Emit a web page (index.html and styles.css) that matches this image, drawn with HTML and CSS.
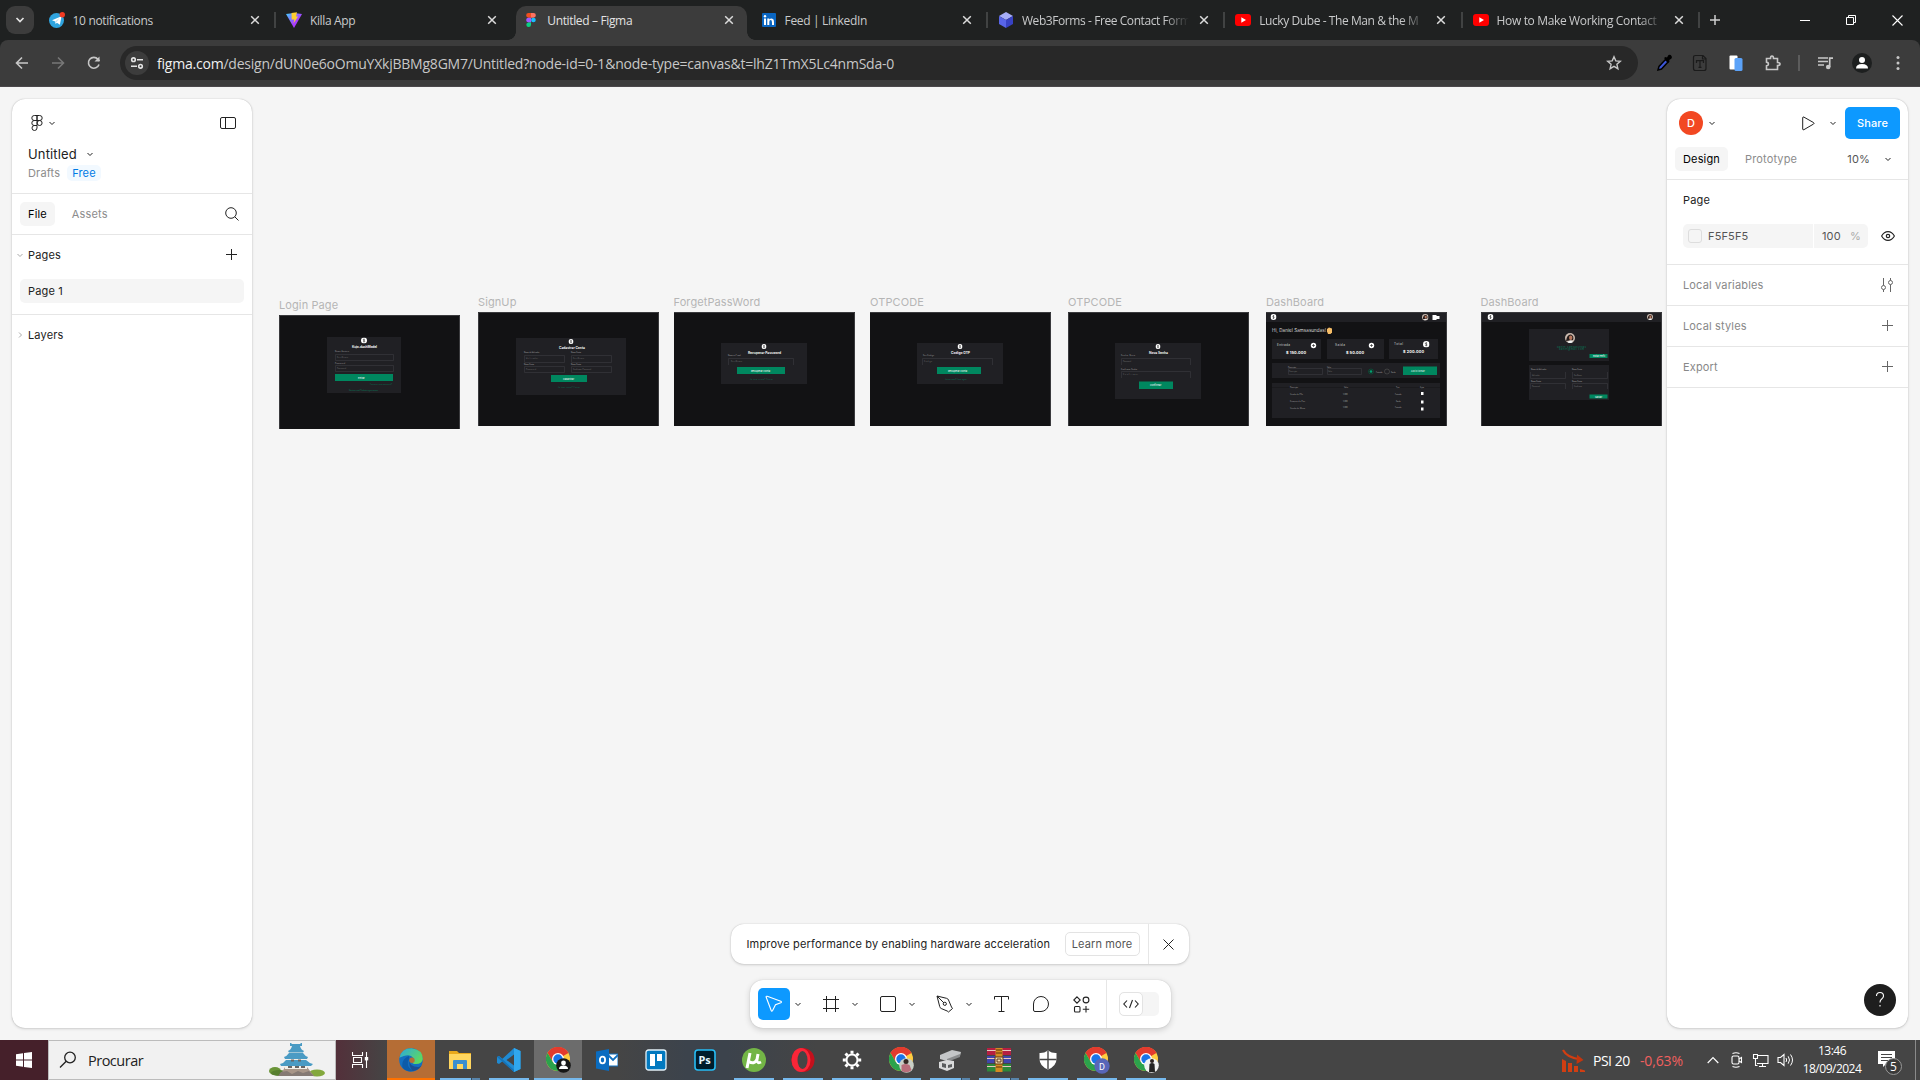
FILE: index.html
```html
<!DOCTYPE html>
<html lang="en">
<head>
<meta charset="utf-8">
<title>Untitled – Figma</title>
<link rel="stylesheet" href="styles.css">
</head>
<body>
<svg class="defs" width="0" height="0">
  <defs>
    <symbol id="close" viewBox="0 0 10 10"><path d="M1.2 1.2l7.6 7.6M8.8 1.2L1.2 8.8" fill="none" stroke="currentColor" stroke-width="1.5"/></symbol>
    <symbol id="chev" viewBox="0 0 8 8"><path d="M1.5 3L4 5.5 6.5 3" fill="none" stroke="currentColor"/></symbol>
    <symbol id="plus" viewBox="0 0 12 12"><path d="M5.5 0v11M0 5.500h11" fill="none" stroke="currentColor"/></symbol>
    <symbol id="youtube" viewBox="0 0 16 16"><rect y="2" width="16" height="12" rx="3" fill="#f00"/><path d="M6.3 5.3v5.4L11 8z" fill="#fff"/></symbol>
    <symbol id="chrome" viewBox="0 0 24 24"><circle cx="12" cy="12" r="12" fill="#ffcd40"/><path d="M12 12L1.6 6A12 12 0 0 1 22.4 6z" fill="#e33b2e"/><path d="M12 6h10.4A12 12 0 0 0 1.6 6l5.2 9z" fill="#e33b2e"/><path d="M1.6 6A12 12 0 0 0 12 24l5.2-9H6.8z" fill="#2ba24c"/><circle cx="12" cy="12" r="6" fill="#fff"/><circle cx="12" cy="12" r="4.7" fill="#1a73e8"/></symbol>
    <symbol id="coin" viewBox="0 0 6 6"><circle cx="3" cy="3" r="3" fill="#fff"/><path d="M3.8 1.9q-1.6-.6-1.6.4 0 .6.8.7t.8.8q0 .9-1.7.3M3 1.2v3.6" fill="none" stroke="#222" stroke-width=".5"/></symbol>
    <symbol id="portrait" viewBox="0 0 10 10"><circle cx="5" cy="5" r="5" fill="#c9b9ae"/><path d="M1 8Q2 1 6 1.500Q9.500 3 8 7z" fill="#231a19"/><ellipse cx="5.700" cy="4.800" rx="1.700" ry="2.200" fill="#b8795f"/><path d="M2.500 9.300Q5 6 8 9q-3 2-5.500.3z" fill="#eee"/></symbol>
  </defs>
</svg>

<div class="tabstrip">
  <button class="tab-search"><svg width="10" height="10" viewBox="0 0 10 10"><path d="M1.500 3L5 6.500 8.500 3" fill="none" stroke="#e3e3e3" stroke-width="1.700"/></svg></button>
  <div class="tabs">
    <div class="tab"><svg class="fav" viewBox="0 0 16 16"><circle cx="7.500" cy="8.500" r="7.500" fill="#2fa4df"/><path d="M3 8.300l9.500-4-1.600 8.400-3-2-1.300 1.400-.4-2.700z" fill="#fff"/><path d="M6.200 9.400l4.500-3.600-3.300 4.500z" fill="#c0dff0"/><circle cx="13.300" cy="2.700" r="2.700" fill="#f23a22"/></svg><span class="tab-title">10 notifications</span><svg class="x"><use href="#close"/></svg></div>
    <div class="tab"><svg class="fav" viewBox="0 0 16 16"><defs><linearGradient id="vg" x2="1" y2="1"><stop stop-color="#41d1ff"/><stop offset=".6" stop-color="#a93dff"/></linearGradient></defs><path d="M0 2l8-1 8 1-8 14z" fill="url(#vg)"/><path d="M5.500 1l5.500-.8-1 4.300 2 .1-4.500 7 .8-4.200-2.600.1z" fill="#ffce2e"/></svg><span class="tab-title">Killa App</span><svg class="x"><use href="#close"/></svg></div>
    <div class="tab active"><svg class="fav" viewBox="0 0 16 16"><path d="M5.500 1H8v4.700H5.500a2.350 2.350 0 0 1 0-4.700z" fill="#f24e1e"/><path d="M8 1h2.500a2.350 2.350 0 0 1 0 4.700H8z" fill="#ff7262"/><path d="M5.500 5.700H8v4.700H5.500a2.350 2.350 0 0 1 0-4.700z" fill="#a259ff"/><circle cx="10.400" cy="8" r="2.350" fill="#1abcfe"/><path d="M5.500 10.400H8v2.300a2.350 2.350 0 1 1-2.500-2.300z" fill="#0acf83"/></svg><span class="tab-title">Untitled – Figma</span><svg class="x"><use href="#close"/></svg></div>
    <div class="tab"><svg class="fav" viewBox="0 0 16 16"><rect x="1" y="1" width="14" height="14" rx="1" fill="#0a66c2"/><path d="M3 6.500h2V13H3zM6.300 6.500h2v1q2-2.200 4.200 0 .6 1 .5 5.500h-2q.2-5-1.200-5-1.700 0-1.500 2v3h-2z" fill="#fff"/><circle cx="4" cy="4.200" r="1.200" fill="#fff"/></svg><span class="tab-title">Feed | LinkedIn</span><svg class="x"><use href="#close"/></svg></div>
    <div class="tab"><svg class="fav" viewBox="0 0 16 16"><path d="M8 0l7 4-7 4-7-4z" fill="#a6adf8"/><path d="M1 4l7 4v8l-7-4z" fill="#5865e8"/><path d="M15 4L8 8v8l7-4z" fill="#3842c4"/></svg><span class="tab-title fade tight">Web3Forms - Free Contact Form</span><svg class="x"><use href="#close"/></svg></div>
    <div class="tab"><svg class="fav"><use href="#youtube"/></svg><span class="tab-title fade tight">Lucky Dube - The Man &amp; the M</span><svg class="x"><use href="#close"/></svg></div>
    <div class="tab"><svg class="fav"><use href="#youtube"/></svg><span class="tab-title fade">How to Make Working Contact</span><svg class="x"><use href="#close"/></svg></div>
  </div>
  <svg class="newtab" width="12" height="12" viewBox="0 0 12 12"><path d="M6 1v10M1 6h10" stroke="#d0d0d0" stroke-width="1.500"/></svg>
  <div class="winctl">
    <svg width="10" height="10"><path d="M0 5.500h10" stroke="#fff"/></svg>
    <svg width="10" height="10"><path d="M.5 2.500h7v7h-7zM2.500 2.500v-2h7v7h-2" fill="none" stroke="#fff"/></svg>
    <svg width="11" height="11"><path d="M.5.5l10 10M10.500.5l-10 10" stroke="#fff" stroke-width="1.100"/></svg>
  </div>
</div>

<div class="navbar">
  <div class="nav-btns">
    <svg width="16" height="16"><path d="M14 8H3M8 2.500L2.500 8 8 13.500" fill="none" stroke="#c7c7c7" stroke-width="1.600"/></svg>
    <svg width="16" height="16"><path d="M2 8h11M8 2.500L13.500 8 8 13.500" fill="none" stroke="#777" stroke-width="1.600"/></svg>
    <svg width="16" height="16"><path d="M13 9.500A5.400 5.400 0 1 1 12 4.300L13.500 6" fill="none" stroke="#c7c7c7" stroke-width="1.600"/><path d="M13.500 1.500v5h-5z" fill="#c7c7c7"/></svg>
  </div>
  <div class="omnibox">
    <span class="site"><svg width="14" height="14"><g fill="none" stroke="#e3e3e3" stroke-width="1.600"><circle cx="3.500" cy="3.700" r="1.800"/><circle cx="10.500" cy="10.300" r="1.800"/><path d="M7 3.700h6M1 10.300h6"/></g></svg></span>
    <span class="url"><b>figma.com</b>/design/dUN0e6oOmuYXkjBBMg8GM7/Untitled?node-id=0-1&amp;node-type=canvas&amp;t=lhZ1TmX5Lc4nmSda-0</span>
    <svg class="star" width="16" height="16"><path d="M8 1.800l1.800 4.100 4.500.4-3.400 3 1 4.400L8 11.400l-3.900 2.300 1-4.400-3.400-3 4.500-.4z" fill="none" stroke="#c7c7c7" stroke-width="1.400"/></svg>
  </div>
  <div class="ext">
    <svg width="16" height="18"><path d="M2 16l1-3.500 6.500-7 2.500 2.500-6.500 7z" fill="#3d57d8" stroke="#000" stroke-width="1.500"/><path d="M8 4l1.500-1 1.500.4L12.500 1q2-.8 3 1t-.6 3l-1.700 1 .3 1.500L12.500 9z" fill="#000"/></svg>
    <svg class="g20" width="16" height="18"><path d="M3.500 1.500H11l3 3v10q0 2-2 2H3.500q-2 0-2-2v-11q0-2 2-2zM10.500 1.500v3.500H14" fill="none" stroke="#1b1b1b" stroke-width="1.200"/><path d="M4.500 9V6.700h7V9M8 6.700v6.500M6.500 13.300h3" fill="none" stroke="#1b1b1b" stroke-width="1.200"/></svg>
    <svg class="g20" width="16" height="18"><rect x="1.500" y="1.500" width="8" height="14" rx="1" fill="#fff"/><rect x="6.500" y="4" width="8" height="13" rx="1.500" fill="#5ba2f8"/></svg>
    <svg class="g20" width="18" height="18"><path d="M2.500 4.500h4Q6.500 2 8 2t1.500 2.500h4v4Q16 8.500 16 10t-2.500 1.500v4h-11v-3.600q2-.3 2-1.900t-2-1.900z" fill="none" stroke="#c7c7c7" stroke-width="1.600"/></svg>
    <i class="vbar"></i>
    <svg width="16" height="16"><path d="M0 3h10M0 6.500h10M0 10h6" stroke="#c7c7c7" stroke-width="1.500"/><path d="M11.700 12V3.200H15" fill="none" stroke="#c7c7c7" stroke-width="1.700"/><circle cx="10.200" cy="12" r="2.300" fill="#c7c7c7"/></svg>
    <svg class="me" width="20" height="20"><circle cx="10" cy="10" r="10" fill="#1d1f1f"/><circle cx="10" cy="7" r="3" fill="#fff"/><path d="M4 15.500q0-4.500 6-4.500t6 4.500z" fill="#fff"/></svg>
    <svg class="more" width="4" height="16"><g fill="#c7c7c7"><circle cx="2" cy="2.500" r="1.500"/><circle cx="2" cy="8" r="1.500"/><circle cx="2" cy="13.500" r="1.500"/></g></svg>
  </div>
</div>

<main class="workspace">
  <aside class="panel left">
    <div class="file-head">
      <div class="row">
        <span class="logo-menu"><svg width="12" height="16"><path d="M6 .5H3.300a2.500 2.500 0 0 0 0 5H6zM6 .5h2.700a2.500 2.500 0 0 1 0 5H6zM6 5.500H3.300a2.500 2.500 0 0 0 0 5H6zM6 10.500H3.300A2.500 2.500 0 1 0 6 13z" fill="none" stroke="#222"/><circle cx="8.600" cy="8" r="2.500" fill="none" stroke="#222"/></svg><svg width="8" height="8"><use href="#chev"/></svg></span>
        <svg width="16" height="12"><rect x=".5" y=".5" width="15" height="11" rx="1.500" fill="none" stroke="#222"/><path d="M5.500.5v11" stroke="#222"/></svg>
      </div>
      <div class="file-name"><span>Untitled</span><svg width="8" height="8"><use href="#chev"/></svg></div>
      <div class="file-meta"><span>Drafts</span><span class="free">Free</span></div>
    </div>
    <div class="sec left-tabs"><span class="pill">File</span><span class="muted">Assets</span><svg class="end" width="14" height="14"><circle cx="6" cy="6" r="5.300" fill="none" stroke="#222"/><path d="M9.800 9.800l3.700 3.700" stroke="#222"/></svg></div>
    <div class="sec pages">
      <div class="row-title"><svg class="tiny" width="8" height="8"><use href="#chev"/></svg><span>Pages</span><svg class="end" width="12" height="12"><use href="#plus"/></svg></div>
      <div class="page-item">Page 1</div>
    </div>
    <div class="sec layers"><div class="row-title"><svg class="tiny turn" width="8" height="8"><use href="#chev"/></svg><span>Layers</span></div></div>
  </aside>

  <section class="canvas">
    <figure class="frame f1"><figcaption>Login Page</figcaption>
      <svg width="181" height="114"><rect width="181" height="114" fill="#121214"/><path d="M.5 114V.5h180V114" fill="none" stroke="#3a3a3d"/><rect x="48" y="22" width="74" height="56" fill="#202024"/>
      <use href="#coin" x="82" y="22.500" width="6" height="6"/>
      <text class="h" x="73" y="33" textLength="25">Kujo-dashModel</text><text class="s" x="56" y="37" textLength="14">Nome Usuário</text><text class="s" x="56" y="49" textLength="10">Password</text>
      <path class="in" d="M56.500 39.500h58v6h-58zM56.500 50.500h58v6h-58z"/><text class="p" x="58" y="43" textLength="11">SeuNome</text><text class="p" x="58" y="54" textLength="9">Password</text>
      <rect x="56" y="59" width="58" height="7" fill="#00875f"/><text class="b" x="79" y="63.500">Entrar</text><text class="g" x="91" y="69.500" textLength="22">Esqueceu sua password?</text><text class="g" x="70" y="75.500" textLength="29">Não tem conta? Cadastre agora mesmo</text></svg></figure>
    <figure class="frame f2"><figcaption>SignUp</figcaption>
      <svg width="181" height="114"><rect width="181" height="114" fill="#121214"/><path d="M.5 114V.5h180V114" fill="none" stroke="#3a3a3d"/><rect x="38" y="26" width="110" height="57" fill="#202024"/>
      <use href="#coin" x="90.500" y="27" width="5" height="5"/><text class="h" x="81" y="36.500" textLength="26">Cadastrar Conta</text>
      <text class="s" x="46" y="41">Nome do Utilizador</text><text class="s" x="93" y="41">Nome Conta</text><text class="s" x="46" y="53">Nome Conta</text><text class="s" x="93" y="53">Nome Conta</text>
      <path class="in" d="M46.500 43.500h40v7h-40zM93.500 43.500h40v7h-40zM46.500 54.500h40v6h-40zM93.500 54.500h40v6h-40z"/><text class="p" x="48" y="47" textLength="12">Utilizador</text><text class="p" x="95" y="47" textLength="11">SeuNome</text><text class="p" x="48" y="58" textLength="10">Password</text><text class="p" x="95" y="58" textLength="18">Confirmar Password</text>
      <rect x="73" y="63" width="36" height="7" fill="#00875f"/><text class="b" x="85" y="67.500">Cadastrar</text><text class="g" x="80" y="75.500" textLength="22">Já tem conta? Entrar</text></svg></figure>
    <figure class="frame f3"><figcaption>ForgetPassWord</figcaption>
      <svg width="181" height="114"><rect width="181" height="114" fill="#121214"/><path d="M0 .5h180.500V114" fill="none" stroke="#3a3a3d"/><rect x="47" y="31" width="86" height="41" fill="#202024"/>
      <use href="#coin" x="87.500" y="32" width="5" height="5"/><text class="h" x="74" y="41.500" textLength="33">Recuperar Password</text><text class="s" x="54" y="44">Nome ou E-mail</text>
      <path class="in" d="M54.500 53v-6.500h65V53"/><text class="p" x="57" y="50" textLength="11">SeuNome</text><rect x="63" y="55" width="48" height="7" fill="#00875f"/><text class="b" x="77" y="59.500">Recuperar Conta</text><text class="g" x="76" y="68" textLength="23">Já tem conta? Entrar</text></svg></figure>
    <figure class="frame f4"><figcaption>OTPCODE</figcaption>
      <svg width="181" height="114"><rect width="181" height="114" fill="#121214"/><path d="M0 .5h180.500V114" fill="none" stroke="#3a3a3d"/><rect x="47" y="31" width="86" height="41" fill="#202024"/>
      <use href="#coin" x="87.500" y="32" width="5" height="5"/><text class="h" x="81" y="41.500" textLength="19">Codigo OTP</text><text class="s" x="53" y="44" textLength="11">Seu Código</text>
      <path class="in" d="M52.500 53v-6.500h70V53"/><text class="p" x="54" y="50" textLength="8">Código</text><rect x="67" y="55" width="44" height="7" fill="#00875f"/><text class="b" x="78" y="59.500">Recuperar Conta</text><text class="g" x="75" y="67.500">Já tem conta? Entrar agora</text></svg></figure>
    <figure class="frame f5"><figcaption>OTPCODE</figcaption>
      <svg width="181" height="114"><rect width="181" height="114" fill="#121214"/><path d="M.5 114V.5h180V114" fill="none" stroke="#3a3a3d"/><rect x="47" y="31" width="86" height="56" fill="#202024"/>
      <use href="#coin" x="87.500" y="32" width="5" height="5"/><text class="h" x="81" y="42" textLength="19">Nova Senha</text><text class="s" x="53" y="44" textLength="14">Senha Nova</text><text class="s" x="53" y="58" textLength="16">Confirmar Senha</text>
      <path class="in" d="M53.500 53v-6.500h69V53M53.500 66v-6.500h69V66"/><text class="p" x="55" y="50" textLength="8">Password</text><text class="p" x="55" y="63" textLength="15">Confirmar</text><rect x="71" y="69.500" width="34" height="7.500" fill="#00875f"/><text class="b" x="82" y="74">Confirmar</text></svg></figure>
    <figure class="frame f6"><figcaption>DashBoard</figcaption>
      <svg width="181" height="114"><rect width="181" height="114" fill="#121214"/><rect width="181" height="10" fill="#202024"/><path d="M0 .5h180.500V114" fill="none" stroke="#3a3a3d"/>
      <use href="#coin" x="4.500" y="2" width="6" height="6"/><use href="#portrait" x="156" y="2" width="6.500" height="6.500"/><path d="M166.500 3h4v1h3v3h-3v1h-4z" fill="#fff"/>
      <text class="hi" x="6" y="20" textLength="54">Hi, Daniel Samsasundas!</text><path d="M61 17l2-1.500 3 1v4l-1.500 1.500h-2.500l-1-2.500z" fill="#f5bd67"/>
      <g fill="#202024"><rect x="6" y="27" width="49" height="20"/><rect x="61" y="27" width="57" height="20"/><rect x="123" y="27" width="49" height="20"/><rect x="6" y="51" width="168" height="15"/><rect x="6" y="71" width="168" height="35"/></g>
      <g class="m"><text x="11" y="34" textLength="13">Entrada</text><text x="69" y="34" textLength="10">Saida</text><text x="128" y="33" textLength="9">Total</text></g>
      <g class="val"><text x="20" y="42" textLength="20">$ 150.000</text><text x="80" y="42" textLength="18">$ 50.000</text><text x="137" y="41" textLength="21">$ 200.000</text></g>
      <circle cx="47.500" cy="33.500" r="2.700" fill="#fff"/><path d="M47.500 32v3M46 33.500h3" stroke="#222" stroke-width=".6"/><circle cx="105.500" cy="33.500" r="2.700" fill="#fff"/><path d="M105.500 32v3M104 33.500h3" stroke="#222" stroke-width=".6"/><use href="#coin" x="157" y="29" width="6.500" height="6.500"/>
      <text class="s" x="22" y="55.500">Descrição</text><text class="s" x="61" y="55.500">Valor</text><path class="in" d="M22.500 56.500h34v6h-34zM61.500 56.500h34v6h-34z"/><text class="p" x="23" y="60">Descrição</text><text class="p" x="62" y="60">Valor</text>
      <circle cx="105" cy="59.500" r="2.500" fill="#202024" stroke="#00643f" stroke-width=".6"/><circle cx="105" cy="59.500" r="1.300" fill="#00a070"/><circle cx="121" cy="59.500" r="2.500" fill="none" stroke="#555" stroke-width=".6"/><text class="s" x="110" y="60.500">Entrada</text><text class="s" x="125" y="60.500">Saida</text>
      <rect x="137" y="54.500" width="34" height="8.500" fill="#00875f"/><text class="b" x="145" y="59.500" textLength="14">Adicionar</text><path d="M6 75.500h168" stroke="#18181b" stroke-width=".7"/>
      <g class="s"><text x="24" y="75.500">Descrição</text><text x="78" y="75.500">Valor</text><text x="130" y="75.500">Tipo</text><text x="154" y="75.500">Ação</text><text x="24" y="82.500" textLength="13">Venda de PCs</text><text x="77" y="82.500">5.000</text><text x="129" y="82.500">Entrada</text><text x="24" y="90" textLength="15">Compra de Pão</text><text x="77" y="90">5.000</text><text x="130" y="90">Saida</text><text x="24" y="96.500" textLength="15">Venda de Mesa</text><text x="77" y="96">5.000</text><text x="129" y="96">Entrada</text></g>
      <path d="M155 80h2.500v3H155zM155 88.500h2.500v3H155zM155 95.500h2.500v3H155z" fill="#fff"/></svg></figure>
    <figure class="frame f7"><figcaption>DashBoard</figcaption>
      <svg width="181" height="114"><rect width="181" height="114" fill="#121214"/><rect width="181" height="10" fill="#202024"/><path d="M.5 114V.5h180V114" fill="none" stroke="#3a3a3d"/>
      <use href="#coin" x="6.500" y="2" width="6" height="6"/><use href="#portrait" x="166" y="2" width="6" height="6"/><rect x="48" y="17" width="80" height="32" fill="#202024"/><rect x="48" y="53" width="80" height="35" fill="#202024"/>
      <use href="#portrait" x="84" y="21" width="10" height="10"/><text class="g2" x="76" y="35.500" textLength="29">Daniel Samsasundas</text><text class="g2" x="78" y="38" textLength="25">daniel@mail.com</text>
      <rect x="108.500" y="42" width="18" height="4" fill="#00875f"/><text class="b" x="112" y="45" textLength="12">Editar Perfil</text><rect x="108.500" y="82.500" width="18" height="4" fill="#00875f"/><text class="b" x="114" y="85.500">Salvar</text>
      <g class="s"><text x="50" y="58">Nome do Utilizador</text><text x="91" y="58">Nome Conta</text><text x="50" y="70">Nome Conta</text><text x="91" y="70">Nome Conta</text></g>
      <path class="in" d="M49.500 60v6.500h35V60M91.500 60v6.500h35V60M49.500 77v-5.500h35V77M91.500 77v-5.500h35V77"/><g class="p"><text x="51" y="64">Utilizador</text><text x="93" y="64">SeuNome</text><text x="51" y="75">Password</text><text x="93" y="75">Confirmar</text></g></svg></figure>

    <div class="dock">
      <div class="banner"><span class="msg">Improve performance by enabling hardware acceleration</span><span class="learn">Learn more</span><span class="dismiss"><svg width="11" height="11"><path d="M.5.5l10 10M10.500.5l-10 10" stroke="#222"/></svg></span></div>
      <div class="tools">
        <span class="tool on"><svg width="18" height="18"><path d="M1.200 2.300q-.4-1.400 1-1l13.600 5q1.300.7 0 1.500L10.500 9.700l-3 6q-.8 1.100-1.300-.2z" fill="none" stroke="#fff" stroke-width="1.100"/></svg></span><svg class="cv" width="8" height="8"><use href="#chev"/></svg>
        <span class="tool"><svg width="16" height="16"><path d="M3.500 0v16M12.500 0v16M0 3.500h16M0 12.500h16" stroke="#222"/></svg></span><svg class="cv" width="8" height="8"><use href="#chev"/></svg>
        <span class="tool"><svg width="16" height="16"><rect x=".5" y=".5" width="15" height="15" rx="1.500" fill="none" stroke="#222"/></svg></span><svg class="cv" width="8" height="8"><use href="#chev"/></svg>
        <span class="tool"><svg width="18" height="18"><path d="M1 1l9.500 2.300q1.500.3 2 1.700l3 7 1 1.500-4 3.500-1.300-1-6-2.500q-1.300-.6-1.500-2zM1 1l7 7" fill="none" stroke="#222"/><circle cx="8.800" cy="8.800" r="1.600" fill="none" stroke="#222"/></svg></span><svg class="cv last" width="8" height="8"><use href="#chev"/></svg>
        <span class="tool"><svg width="15" height="16"><path d="M.5 3.500v-3h14v3M7.500.5v15M4.500 15.500h6" fill="none" stroke="#222"/></svg></span>
        <span class="tool wide"><svg width="16" height="16"><path d="M.5 14V8A7.500 7.500 0 1 1 8 15.500H2Q.5 15.500.5 14z" fill="none" stroke="#222"/></svg></span>
        <span class="tool wide"><svg width="17" height="17"><g fill="none" stroke="#222" stroke-width="1.100"><path d="M4 .8L7.200 4 4 7.200.8 4z"/><circle cx="13" cy="4" r="2.900"/><rect x="1.500" y="10.500" width="5.500" height="5.500" rx="1"/><path d="M13 10v6.500M9.800 13.200h6.400"/></g></svg></span>
        <span class="dev"><span class="toggle"><span class="knob"><svg width="16" height="10"><path d="M4 1.500L.8 5 4 8.500M12 1.500L15.200 5 12 8.500M9.500 1l-3 8" fill="none" stroke="#222" stroke-width="1.100"/></svg></span></span></span>
      </div>
    </div>
  </section>

  <aside class="panel right">
    <div class="r-head">
      <div class="r-top"><span class="avatar">D</span><svg width="8" height="8"><use href="#chev"/></svg><svg class="play" width="13" height="15"><path d="M.7 1.800Q.7.500 1.900 1.100l9.700 5.500q1 .7 0 1.400L1.900 13.700Q.7 14.300.7 13z" fill="none" stroke="#222"/></svg><svg width="8" height="8"><use href="#chev"/></svg><span class="share">Share</span></div>
      <div class="r-tabs"><span class="pill">Design</span><span class="muted">Prototype</span><span class="zoomlvl">10%</span><svg width="8" height="8"><use href="#chev"/></svg></div>
    </div>
    <div class="sec r-page"><div class="r-title">Page</div>
      <div class="fill"><div class="hex"><i></i>F5F5F5</div><div class="op">100<em>%</em></div><svg width="14" height="10"><path d="M.6 5Q3 .6 7 .6T13.400 5Q11 9.400 7 9.400T.6 5z" fill="none" stroke="#222" stroke-width="1.100"/><circle cx="7" cy="5" r="1.700" fill="none" stroke="#222" stroke-width="1.200"/></svg></div>
    </div>
    <div class="sec opt">Local variables<svg width="14" height="14"><g fill="none" stroke="#666"><path d="M3.500 0v7.500M3.500 11.500V14M10.500 0v2.500M10.500 6.500V14"/><circle cx="3.500" cy="9.500" r="2"/><circle cx="10.500" cy="4.500" r="2"/></g></svg></div>
    <div class="sec opt">Local styles<svg width="12" height="12"><use href="#plus"/></svg></div>
    <div class="sec opt">Export<svg width="12" height="12"><use href="#plus"/></svg></div>
    <div class="sec rest"><span class="help"><svg width="12" height="18"><path d="M2.500 5q0-3.500 3.500-3.500T9.500 5q0 1.700-1.800 3T6 11.500M6 14v1.500" fill="none" stroke="#fff" stroke-width="1.100"/></svg></span></div>
  </aside>
</main>

<footer class="taskbar">
  <span class="start"><svg width="16" height="16"><path d="M0 2.300L7 1.300v6.300H0zM8 1.100L16 0v7.600H8zM0 8.500h7v6.300l-7-1zM8 8.500h8V16l-8-1.100z" fill="#fff"/></svg></span>
  <div class="search"><svg width="18" height="18"><circle cx="11" cy="6.500" r="5.300" fill="none" stroke="#222" stroke-width="1.300"/><path d="M7.200 10.300L1 16.500" stroke="#222" stroke-width="1.300"/></svg><span>Procurar</span>
    <svg class="castle" width="58" height="36"><ellipse cx="7" cy="29" rx="6" ry="4" fill="#6a9438"/><ellipse cx="11" cy="31" rx="8" ry="3" fill="#577f30"/><ellipse cx="49" cy="31" rx="8" ry="3.500" fill="#83a83d"/><path d="M12 34l5-9h22l7 9z" fill="#a89688"/><path d="M10 34l3-4 6-1 5 3 6-3 5 2 6-2 5 5z" fill="#857a74"/><path d="M17 20h22v7H17zM20 13h16v7H20zM23 6h10v7H23z" fill="#f2efe8"/><path d="M12 22q4-1 6-4h20q3 3 7 4l-2 2H13zM16 15q3-1 5-4h14q2 3 5 4l-1 2H17zM20 9q3-1 4-5h8q1 4 4 5l-1 1.500H21zM22 4V1h1.500v1h9V1H34v3z" fill="#4a9bc4"/><path d="M20 24h4v2h-4zM27 24h4v2h-4zM33 24h4v2h-4zM23 17.500h3v2h-3zM30 17.500h3v2h-3z" fill="#666"/></svg>
  </div>
  <span class="taskview"><svg width="17" height="16"><path d="M.5 0v3.500h10V0M.5 16v-3.500h10V16M1.500 5.500h8v5h-8zM14.500 0v16" fill="none" stroke="#fff" stroke-width="1.100"/><rect x="12.800" y="5" width="3.400" height="3.400" fill="#fff"/></svg></span>
  <div class="apps">
    <span class="app edge"><svg width="24" height="24"><defs><linearGradient id="eg" x2="1" y2=".6"><stop stop-color="#2aa9e0"/><stop offset="1" stop-color="#5fd95e"/></linearGradient></defs><circle cx="12" cy="12" r="11.800" fill="#136fc0"/><path d="M.5 10Q2 .2 12.500.2 23.800 1.500 23.800 11q-.5 5-7 5-4 0-3.300-2 2-1.500.8-4Q12 6.500 7 7.500 2 8.500.5 10z" fill="url(#eg)"/><path d="M10 11q-4 9 5.500 11.500Q8 25 3.500 19.500 2 11 10 8z" fill="#0d5ba8"/><path d="M10.500 12.500q0 7 9.500 6.500l2.500-1.500q-4 6-9 5-4-4-3-10z" fill="#1a4f92"/><circle cx="13" cy="12.300" r="2.700" fill="#b56d35"/></svg></span>
    <span class="app multi"><svg width="22" height="20"><path d="M0 1h8l2 2h12v16H0z" fill="#e9a91c"/><rect y="4" width="22" height="15" fill="#ffd65f"/><path d="M4 19v-8q0-1 1-1h12q1 0 1 1v8h-4v-5H8v5z" fill="#3b8fcf"/></svg></span>
    <span class="app open"><svg width="24" height="24"><path d="M17 0l6.500 3v18L17 24 5.500 13.200 2 16 0 15V9l2-1 3.500 2.800z" fill="#1f8ad2"/><path d="M17 0l6.500 3v18L17 24z" fill="#30a7ee"/><path d="M17 6.500v11L9.500 12z" fill="#454545"/><path d="M0 9l2-1 15 14v2z" fill="#1673b6"/></svg></span>
    <span class="app open sel"><svg width="25" height="26"><use href="#chrome" width="24" height="24"/><circle cx="17.500" cy="18.500" r="7.300" fill="#161616"/><circle cx="17.500" cy="16" r="2.400" fill="#fff"/><path d="M13 22q0-3.500 4.500-3.500T22 22z" fill="#fff"/></svg></span>
    <span class="app"><svg width="22" height="22"><path d="M12 5h10v12H12z" fill="#fff" stroke="#1070c0"/><path d="M12 6l5 5 5-5" fill="none" stroke="#1070c0" stroke-width="1.800"/><path d="M0 2.500L13 0v22L0 19.500z" fill="#0a6cc0"/><ellipse cx="6.500" cy="11" rx="2.600" ry="3.300" fill="none" stroke="#fff" stroke-width="1.800"/></svg></span>
    <span class="app"><svg width="22" height="22"><rect x="1" y="1" width="20" height="20" rx="2.500" fill="#0279bf" stroke="#e4f1f8" stroke-width="1.300"/><rect x="5" y="5" width="5" height="12" fill="#fff"/><rect x="12" y="5" width="5" height="7" fill="#fff"/></svg></span>
    <span class="app"><svg width="22" height="22"><rect x="1" y="1" width="20" height="20" rx="3" fill="#001d2b" stroke="#26bdf5" stroke-width="1.600"/><text class="ps" x="4.500" y="15">Ps</text></svg></span>
    <span class="app open"><svg width="24" height="24"><circle cx="12" cy="12" r="12" fill="#73b546"/><path d="M8 5L5 20M7 13.500q5 3.500 8-2L16 6M14.800 12q.3 4 4.200 2" fill="none" stroke="#fff" stroke-width="3"/></svg></span>
    <span class="app open"><svg width="24" height="24"><ellipse cx="12" cy="12" rx="11.500" ry="12" fill="#c4101c"/><ellipse cx="10" cy="12" rx="9.500" ry="12" fill="#fa2638"/><ellipse cx="11.500" cy="12" rx="5" ry="9" fill="#454545"/></svg></span>
    <span class="app open"><svg width="20" height="20"><circle cx="10" cy="10" r="5.500" fill="none" stroke="#fff" stroke-width="2"/><path d="M10 .8v3M10 16.200v3M.8 10h3M16.200 10h3M3.500 3.500l2.100 2.100M14.400 14.400l2.100 2.100M16.500 3.500l-2.100 2.100M5.600 14.400l-2.100 2.100" stroke="#fff" stroke-width="3"/></svg></span>
    <span class="app open"><svg width="25" height="26"><use href="#chrome" width="24" height="24"/><circle cx="17.500" cy="18.500" r="7.300" fill="#c9cfc6"/><circle cx="17" cy="14.500" r="2.500" fill="#352923"/><path d="M12.500 24v-6q4-2 8 0l2 5q-4 4-10 1z" fill="#b96e7b"/></svg></span>
    <span class="app multi"><svg width="24" height="22"><path d="M2 6L14 1l9 2-1 4-13 5-7-2z" fill="#c4c6c8"/><path d="M9 10l13-5v3L9 13z" fill="#8a8c8e"/><path d="M1 13l8-2 7 1v7l-7 3-8-3z" fill="#d9dadb"/><path d="M4 14l4 1v4l-4-1zM10 16l4-1v3l-4 1z" fill="#5a5c5e"/></svg></span>
    <span class="app multi"><svg width="24" height="24"><path d="M0 0h24v7H0z" fill="#b51f42"/><path d="M0 8h24v7H0z" fill="#4046ad"/><path d="M0 16h24v7.500H0z" fill="#2d873a"/><path d="M0 2.500h24M0 10.500h24M0 18.500h24" stroke="#e8c7bf" stroke-width="1"/><path d="M8.500 0h7v24h-7z" fill="#d48a22"/><path d="M8 9h8v7H8z" fill="#f2ddb1" stroke="#5b3410"/><path d="M10 11h4v3h-4zM9 2h6M9 5h6M9 19h6" fill="none" stroke="#5b3410"/></svg></span>
    <span class="app open"><svg width="18" height="20"><path d="M9 .5q4 2.800 8.500 2.500v6q0 7-8.500 10.500Q.5 16 .5 9V3Q5 3.300 9 .5z" fill="#fff"/><path d="M9 1v18M.5 9.500h17" stroke="#454545" stroke-width="1.400"/></svg></span>
    <span class="app open"><svg width="26" height="27"><use href="#chrome" width="24" height="24"/><circle cx="18" cy="19" r="7.700" fill="#5866b8"/><text class="dl" x="15" y="22.500">D</text></svg></span>
    <span class="app open"><svg width="25" height="26"><use href="#chrome" width="24" height="24"/><circle cx="17.500" cy="18.500" r="7.300" fill="#f1f2f2"/><circle cx="18" cy="14" r="2" fill="#2a2220"/><path d="M15 25l.5-8q2.500-2 5 0l.5 8z" fill="#242424"/></svg></span>
  </div>
  <div class="tray">
    <svg class="chart" width="23" height="23"><path d="M0 10l4 2v11H0zM6 14h4v9H6zM12 17h4v6h-4zM18 20l5 1.500V23h-5z" fill="#d23e12"/><path d="M1 1q4 8 18 9.500" fill="none" stroke="#d23e12" stroke-width="2.200"/><path d="M15 5.500l6.500 5.500L14.500 15z" fill="#c4350e"/></svg>
    <span class="psi">PSI 20</span><span class="neg">-0,63%</span>
    <svg class="up" width="12" height="8"><path d="M.7 7L6 1.500 11.300 7" fill="none" stroke="#fff" stroke-width="1.200"/></svg>
    <svg class="meet" width="14" height="16"><g fill="none" stroke="#fff" stroke-width="1.100"><rect x="2" y="4" width="7" height="8" rx="1.500"/><path d="M9 7l2.500-1.500v5L9 9M2.500 1.500Q6 0 9.500 1.500M2.500 14.500Q6 16 9.500 14.500"/></g></svg>
    <svg class="net" width="17" height="15"><path d="M5 2.500h11v8H5M10.500 10.500v3M7 13.500h7M1.500 1.500h4v4h-4zM3.500 5.500v7h2" fill="none" stroke="#fff" stroke-width="1.100"/></svg>
    <svg class="vol" width="17" height="14"><path d="M1 4.500h2.500L7 1.500v11l-3.500-3H1z" fill="none" stroke="#fff" stroke-width="1.100"/><path d="M9 5q1.300 2 0 4M11.200 3.300q2.600 3.700 0 7.400M13.500 1.500q4 5.500 0 11" fill="none" stroke="#fff"/></svg>
    <div class="clock"><span>13:46</span><span>18/09/2024</span></div>
    <div class="notif"><svg width="17" height="17"><path d="M0 0h17v13H8l-3 3v-3H0z" fill="#fff"/><path d="M3 3.500h11M3 6.500h11M3 9.500h7" stroke="#454545"/></svg><span class="count">5</span></div>
    <i class="desk"></i>
  </div>
</footer>
</body>
</html>
```

FILE: styles.css
```css
* { box-sizing: border-box; }
body { margin: 0; width: 1920px; height: 1080px; overflow: hidden; display: flex; flex-direction: column; background: #1f2121; font-family: Inter, "Liberation Sans", sans-serif; font-size: 11px; color: #222; }
svg { display: block; flex: none; }
.defs { position: absolute; }
button { border: 0; padding: 0; }

/* browser chrome */
.tabstrip { height: 40px; flex: none; display: flex; align-items: center; font-family: "Open Sans", "Noto Sans", sans-serif; font-size: 12px; }
.tab-search { width: 28px; height: 28px; margin: 0 4.600px 0 6px; border-radius: 9px; background: #3c3c3c; display: grid; place-items: center; }
.tabs { display: flex; align-self: stretch; }
.tab { width: 237.330px; padding: 0 15px 0 10px; display: flex; align-items: center; color: #c9cacb; position: relative; }
.tab::after { content: ""; position: absolute; right: 0; top: 12px; width: 2px; height: 16px; background: #414343; }
.tab:nth-child(2)::after { display: none; }
.tab.active { color: #e3e3e3; }
.tab.active::before { content: ""; position: absolute; left: 3px; right: 4px; top: 6px; bottom: 0; background: #3c3c3c; border-radius: 10px 10px 0 0; }
.tab.active::after { left: -5px; right: -4px; top: 32px; width: auto; height: 8px; background: radial-gradient(circle at 0 0, transparent 7.500px, #3c3c3c 8px) left / 8px 8px no-repeat, radial-gradient(circle at 100% 0, transparent 7.500px, #3c3c3c 8px) right / 8px 8px no-repeat; }
.tab.active > * { position: relative; }
.fav { width: 16px; height: 16px; margin-right: 8px; }
.tab-title { width: 168px; margin-right: 9px; padding-top: 1px; overflow: hidden; white-space: nowrap; line-height: 18px; letter-spacing: -.35px; }
.tight { letter-spacing: -.42px; }
.fade { -webkit-mask-image: linear-gradient(90deg, #000 142px, transparent 167px); mask-image: linear-gradient(90deg, #000 142px, transparent 167px); }
.x { width: 10px; height: 10px; color: #dcdcdc; }
.newtab { margin-left: 9px; }
.winctl { margin-left: auto; padding-right: 17px; display: flex; gap: 36px; }
.navbar { height: 47px; flex: none; background: #3c3c3c; border-radius: 8px 8px 0 0; display: flex; align-items: center; border-bottom: 1px solid #4b484b; }
.nav-btns { width: 120px; padding-left: 14px; display: flex; gap: 20px; }
.omnibox { width: 1518px; height: 34px; border-radius: 17px; background: #282828; display: flex; align-items: center; padding: 0 16px 0 5px; font-family: "Open Sans", "Noto Sans", sans-serif; font-size: 14px; color: #c7c7c7; }
.site { width: 24px; height: 24px; border-radius: 50%; background: #3c3c3c; display: grid; place-items: center; margin-right: 8px; }
.url { letter-spacing: -.22px; white-space: nowrap; }
.url b { font-weight: 400; color: #f1f1f1; }
.star { margin-left: auto; }
.ext { flex: 1; display: flex; align-items: center; padding-left: 18px; }
.g20 { margin-left: 20px; }
.vbar { width: 2px; height: 16px; background: #5c5c5c; margin: 0 18px 0 16px; }
.me { margin-left: 18px; }
.more { margin-left: 24px; }

/* editor */
.workspace { flex: 1; min-height: 0; display: flex; padding: 12px; background: #f5f5f5; }
.panel { background: #fff; border-radius: 13px; box-shadow: 0 0 1px rgba(0,0,0,.3), 0 1px 3px rgba(0,0,0,.15); display: flex; flex-direction: column; z-index: 1; letter-spacing: .15px; }
.left { width: 240px; }
.right { width: 241px; }
.sec { border-top: 1px solid #e6e6e6; }
.muted { color: #8c8c8c; }
.pill { background: #f5f5f5; border-radius: 5px; height: 24px; line-height: 24px; padding: 0 8px; color: #000; }
.end { margin-left: auto; }
.file-head { height: 94px; padding: 16px 16px 0; }
.row { height: 16px; display: flex; justify-content: space-between; align-items: center; padding-left: 3px; }
.logo-menu { display: flex; align-items: center; gap: 5px; }
.file-name { display: flex; align-items: center; gap: 9px; font-size: 13px; line-height: 20px; margin-top: 13px; }
.file-meta { display: flex; align-items: center; gap: 7px; color: #8c8c8c; line-height: 16px; margin-top: 1px; }
.free { background: #f2f9ff; color: #007be5; border-radius: 5px; padding: 0 5px; }
.left-tabs { height: 41px; display: flex; align-items: center; padding: 0 13px 0 8px; gap: 17px; }
.pages { height: 80px; padding: 8px; }
.row-title { height: 24px; display: flex; align-items: center; padding-right: 6px; }
.pages .row-title { margin-bottom: 12px; }
.tiny { margin: 0 4px 0 -4px; color: #aaa; }
.turn { transform: rotate(-90deg); }
.page-item { height: 24px; line-height: 24px; padding-left: 8px; border-radius: 5px; background: #f5f5f5; }
.layers { padding: 8px; }

.r-head { height: 80px; padding: 8px; }
.r-top { height: 32px; display: flex; align-items: center; padding-left: 4px; }
.avatar { width: 24px; height: 24px; border-radius: 50%; background: #f24822; color: #fff; text-align: center; line-height: 24px; font-weight: 500; margin-right: 5px; }
.play { margin: 0 14px 0 auto; }
.share { width: 55px; height: 32px; line-height: 32px; border-radius: 5px; background: #0d99ff; color: #fff; text-align: center; font-weight: 500; margin-left: 8px; }
.r-tabs { display: flex; align-items: center; margin-top: 8px; padding-right: 8px; }
.r-tabs .muted { margin-left: 17px; }
.zoomlvl { margin: 0 14px 0 auto; color: #555; }
.r-page { height: 85px; padding: 8px 13px 0 16px; }
.r-title { height: 24px; line-height: 25px; margin-bottom: 12px; }
.fill { display: flex; align-items: center; color: #555; }
.hex { width: 130px; height: 24px; background: #f5f5f5; border-radius: 5px 0 0 5px; display: flex; align-items: center; gap: 6px; padding-left: 5px; margin-right: 1px; }
.hex i { width: 14px; height: 14px; border: 1px solid #ddd; border-radius: 3px; }
.op { width: 54px; height: 24px; line-height: 24px; padding: 0 7px 0 8px; background: #f5f5f5; border-radius: 0 5px 5px 0; display: flex; justify-content: space-between; }
.op em { font-style: normal; color: #aaa; }
.fill svg { margin-left: auto; }
.opt { height: 41px; display: flex; justify-content: space-between; align-items: center; padding: 0 14px 0 16px; color: #888; }
.opt svg { color: #666; }
.rest { flex: 1; display: flex; justify-content: flex-end; align-items: flex-end; padding: 12px; }
.help { width: 32px; height: 32px; border-radius: 50%; background: #1e1e1e; display: grid; place-items: center; }

.canvas { flex: 1; display: flex; align-items: flex-end; justify-content: center; }
/* artboards sit at free positions on the canvas */
.frame { position: absolute; margin: 0; width: 181px; }
.frame figcaption { font-size: 11px; line-height: 16px; height: 18px; color: #b5b5b5; white-space: nowrap; letter-spacing: .1px; }
.f1 { left: 279px; top: 297px; }
.f2 { left: 478px; top: 294px; }
.f3 { left: 673.500px; top: 294px; }
.f4 { left: 870px; top: 294px; }
.f5 { left: 1068px; top: 294px; }
.f6 { left: 1266px; top: 294px; }
.f7 { left: 1480.500px; top: 294px; }
.frame text { font-family: Inter, sans-serif; font-size: 1.700px; fill: #aaa; }
.frame .h { font-size: 3.300px; font-weight: 700; fill: #eee; }
.frame .hi { font-size: 4.500px; fill: #ddd; }
.frame .m text { font-size: 3.200px; fill: #ccc; }
.frame .val text { font-size: 3.900px; font-weight: 700; fill: #fff; }
.frame .p, .frame .p text { fill: #777; }
.frame .b { font-size: 2.400px; fill: #fff; }
.frame .g { fill: #087a59; }
.frame .g2 { font-size: 2.300px; fill: #087a59; }
.frame .in { fill: none; stroke: #35353a; stroke-width: .8; }

.dock { display: flex; flex-direction: column; align-items: center; gap: 16px; }
.banner, .tools { background: #fff; border-radius: 13px; box-shadow: 0 0 1px rgba(0,0,0,.25), 0 1px 3px rgba(0,0,0,.16); display: flex; align-items: center; }
.banner { width: 458px; height: 40px; padding-left: 16px; }
.msg { width: 318px; white-space: nowrap; letter-spacing: .17px; color: #222; }
.learn { width: 75px; height: 24px; line-height: 22px; text-align: center; border: 1px solid #e3e3e3; border-radius: 5px; color: #555; white-space: nowrap; letter-spacing: .1px; }
.dismiss { margin-left: auto; width: 41px; height: 40px; border-left: 1px solid #e6e6e6; display: grid; place-items: center; }
.tools { width: 421px; height: 48px; padding-left: 8px; margin-left: 2px; box-shadow: 0 0 1px rgba(0,0,0,.25), 0 2px 6px rgba(0,0,0,.16); }
.tool { width: 32px; height: 32px; border-radius: 5px; display: grid; place-items: center; }
.on { background: #0d99ff; }
.cv { margin: 0 13px 0 4px; }
.last { margin-right: 12px; }
.wide { margin-left: 8px; }
.dev { margin-left: auto; width: 65px; height: 48px; border-left: 1px solid #e6e6e6; padding: 12px; }
.toggle { display: block; width: 40px; height: 24px; border-radius: 5px; background: #f5f5f5; }
.knob { width: 24px; height: 24px; background: #fff; border: 1px solid #e3e3e3; border-radius: 5px; display: grid; place-items: center; }

/* taskbar */
.taskbar { height: 40px; flex: none; background: #454545; display: flex; font-family: "Open Sans", "Noto Sans", sans-serif; color: #fff; }
.start { width: 48px; background: #45202a; display: grid; place-items: center; }
.search { width: 288px; background: #f1f1f1; border: 1px solid #bcbcbc; display: flex; align-items: center; padding: 0 9px 0 10px; color: #222; font-size: 14.500px; letter-spacing: -.5px; }
.search span { margin-left: 11px; }
.castle { margin-left: auto; }
.taskview { width: 51px; background: linear-gradient(90deg, #53303a, #454545); display: grid; place-items: center; padding-right: 3px; }
.apps { display: flex; gap: 1px; background: linear-gradient(90deg, transparent 230px, #3c434c 300px, #3c434c 340px, transparent 430px); }
.app { width: 48px; height: 40px; display: grid; place-items: center; position: relative; }
.app::after { position: absolute; left: 4px; bottom: 0; width: 40px; height: 2px; }
.open::after { content: ""; background: #76b9ed; }
.multi::after { content: ""; background: linear-gradient(90deg, #76b9ed 31px, #35485a 31px, #35485a 32px, #5884aa 32px); }
.sel { background: #6c6c6c; }
.app.sel::after, .app.edge::after { left: 0; width: 48px; }
.edge { background: #b56d35; }
.edge::after { content: ""; background: #ff7200; }
.ps { font: 700 11px "Noto Sans", sans-serif; fill: #e6f7ff; }
.dl { font: 9px Roboto, sans-serif; fill: #fff; }
.tray { margin-left: auto; display: flex; align-items: center; }
.chart { margin-right: 8px; }
.psi, .neg { font-size: 14px; letter-spacing: -.5px; white-space: nowrap; }
.psi { width: 47px; }
.neg { width: 67px; color: #f2605f; letter-spacing: -.15px; }
.up { margin-right: 11px; }
.meet, .net { margin-right: 8px; }
.vol { margin-right: 7px; }
.clock { width: 62px; display: flex; flex-direction: column; align-items: center; font-size: 12px; line-height: 18px; letter-spacing: -.5px; white-space: nowrap; }
.notif { width: 44px; height: 40px; padding: 11px 0 0 15px; position: relative; }
.count { position: absolute; left: 22px; top: 18px; width: 17px; height: 17px; border: 1px solid #999; border-radius: 50%; background: #3b3b3b; font-size: 12px; line-height: 15px; text-align: center; }
.desk { width: 1px; height: 40px; background: #8a8a8a; margin: 0 4px 0 8px; }
```
